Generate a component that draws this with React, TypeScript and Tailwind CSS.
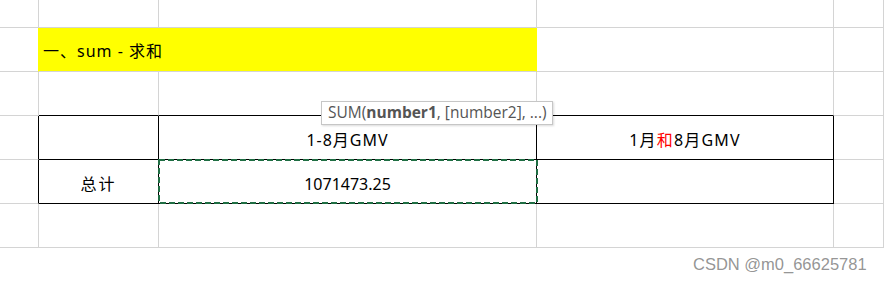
import React from "react";

const COLS = [39, 120, 378, 297];
const ROWS = [28, 44, 44, 44, 44, 44];

const cellFont = { fontFamily: '"Noto Sans", "Noto Sans CJK SC", sans-serif' };

const Cell: React.FC<{
  right?: boolean;
  bottom?: boolean;
  className?: string;
  children?: React.ReactNode;
}> = ({ right, bottom, className = "", children }) => (
  <div
    className={`relative flex items-center border-r border-b ${right ? "border-r-black" : "border-r-[#d4d4d4]"} ${bottom ? "border-b-black" : "border-b-[#d4d4d4]"} ${className}`}
  >
    {children}
  </div>
);

// marching-ants copy marquee
const Marquee = () => (
  <svg className="absolute -top-px -left-px w-[380px] h-[45px] pointer-events-none z-10" viewBox="0 0 380 45">
    <rect x="1" y="1" width="378" height="43" fill="none" stroke="#1f6e43" strokeWidth="2" strokeDasharray="6 3" />
  </svg>
);

export default function App() {
  return (
    <div className="relative w-[884px] h-[282px] overflow-hidden bg-white text-[16px] text-black" style={cellFont}>
      <div
        className="grid"
        style={{
          gridTemplateColumns: `${COLS.map((c) => c + "px").join(" ")} 1fr`,
          gridTemplateRows: `${ROWS.map((r) => r + "px").join(" ")} 1fr`,
        }}
      >
        {/* row 0 */}
        <Cell />
        <Cell />
        <Cell />
        <Cell />
        <Cell />

        {/* row 1 - title */}
        <Cell className="!border-r-[#ffff00]" />
        <Cell className="col-span-2 bg-[#ffff00] !border-r-[#ffff00] pl-1 pt-0.5 tracking-[1px]">一、sum - 求和</Cell>
        <Cell />
        <Cell />

        {/* row 2 */}
        <Cell />
        <Cell bottom />
        <Cell bottom />
        <Cell bottom />
        <Cell />

        {/* row 3 - table header */}
        <Cell right />
        <Cell right bottom />
        <Cell right bottom className="justify-center pt-1 tracking-[1px]">1-8月GMV</Cell>
        <Cell right bottom className="justify-center pt-1 tracking-[1.2px]">
          1月<span className="text-[#ff0000]">和</span>8月GMV
        </Cell>
        <Cell />

        {/* row 4 - totals */}
        <Cell right />
        <Cell right bottom className="justify-center pt-1 tracking-[2px]">总计</Cell>
        <Cell right bottom className="justify-center pt-1">
          1071473.25
          <Marquee />
        </Cell>
        <Cell right bottom />
        <Cell />

        {/* row 5 */}
        <Cell />
        <Cell />
        <Cell />
        <Cell />
        <Cell />

        {/* row 6 */}
        <Cell className="!border-b-0" />
        <Cell className="!border-b-0" />
        <Cell className="!border-b-0" />
        <Cell className="!border-b-0" />
        <Cell className="!border-b-0" />
      </div>

      {/* function hint tooltip */}
      <div
        className="absolute left-[321px] top-[101px] z-20 h-[24px] w-[232px] flex items-center pl-[6px] bg-white border border-[#c6c6c6] shadow-[1px_1px_2px_rgba(0,0,0,0.15)] text-[15.5px] text-[#555] whitespace-nowrap"
        style={{ fontFamily: '"Open Sans", "Noto Sans", sans-serif' }}
      >
        SUM(<span className="font-bold">number1</span>, [number2], ...)
      </div>

      {/* watermark */}
      <div
        className="absolute left-[693px] top-[252px] z-20 text-[16.5px] text-[#888]/90"
        style={{ fontFamily: '"Liberation Sans", Arial, sans-serif' }}
      >
        CSDN @m0_66625781
      </div>
    </div>
  );
}
